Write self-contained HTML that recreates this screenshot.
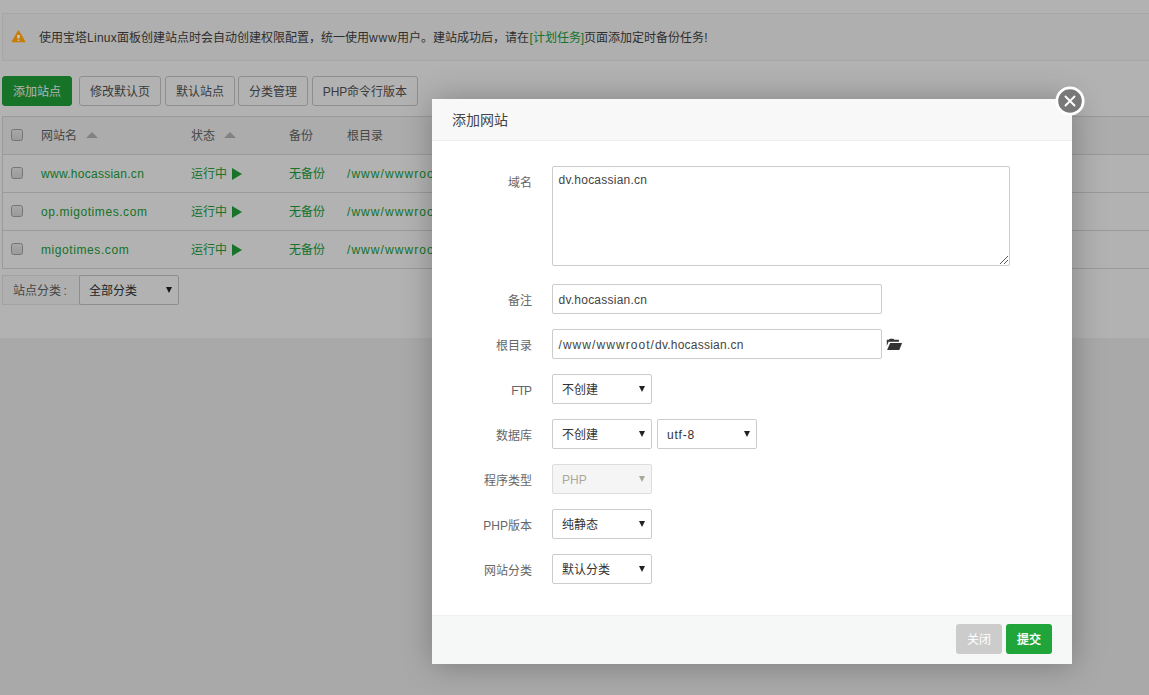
<!DOCTYPE html>
<html lang="zh-CN">
<head>
<meta charset="utf-8">
<title>添加网站</title>
<style>
*{box-sizing:border-box;margin:0;padding:0}
html,body{width:1149px;height:695px;overflow:hidden;background:#f2f2f2;font-family:"Liberation Sans",sans-serif;font-size:12px;color:#666}
.abs{position:absolute}
#page{position:absolute;left:0;top:0;width:1149px;height:695px;overflow:hidden}
#white{position:absolute;left:0;top:0;width:1149px;height:338px;background:#fff}
#tips{position:absolute;left:2px;top:13px;width:1300px;height:48px;border:1px solid #eee;background:#fbfbfb}
#tips .txt{position:absolute;left:36px;top:12px;height:24px;line-height:24px;color:#444;white-space:nowrap;font-size:12px}
#tips .txt a{color:#20a53a;text-decoration:none}
.lt{letter-spacing:.35px}
.btn{position:absolute;top:76px;height:30px;line-height:30px;border:1px solid #ccc;border-radius:3px;background:#fff;color:#555;text-align:center;font-size:12px;white-space:nowrap}
.btn.g{background:#20a53a;border-color:#20a53a;color:#fff}
#tbl{position:absolute;left:2px;top:116px;width:1300px;height:153px;border:1px solid #ddd;border-right:0}
#tbl .r{position:absolute;left:0;width:1300px;height:38px;border-bottom:1px solid #ddd;line-height:39px;white-space:nowrap}
#tbl .h{background:#f6f6f6;color:#666}
#tbl .r span{position:absolute;top:0}
#tbl .r .g{color:#20a53a}
.cb{position:absolute;left:8px;top:12px;width:12px;height:12px;border:1px solid #a8a8a8;border-radius:2.5px;background:linear-gradient(#f0f0f0,#dedede)}
.tri{position:absolute;width:0;height:0;border-left:6px solid transparent;border-right:6px solid transparent;border-bottom:6px solid #bbb}
.play{position:absolute;width:0;height:0;border-top:6px solid transparent;border-bottom:6px solid transparent;border-left:10.5px solid #20a53a}
#cat{position:absolute;left:2px;top:275px;width:78px;height:30px;border:1px solid #e9e9e9;border-right:0;background:#fbfbfb;line-height:30px;padding-left:10px;color:#666}
.sel{position:absolute;height:30px;width:100px;border:1px solid #ccc;border-radius:2px;background:#fff;line-height:30px;padding-left:9px;color:#333;font-size:12px;white-space:nowrap}
.sel i{position:absolute;right:6px;top:11px;width:0;height:0;border-left:3.5px solid transparent;border-right:3.5px solid transparent;border-top:6px solid #222}
.sel.dis{background:#f5f5f5;color:#aca899;border-color:#ddd}
.sel.dis i{border-top-color:#aca899}
#shade{position:absolute;left:0;top:0;width:1149px;height:695px;background:rgba(0,0,0,.3)}
#dlg{position:absolute;left:432px;top:99px;width:640px;height:565px;background:#fff;box-shadow:1px 1px 30px rgba(0,0,0,.28)}
#dlg .tt{position:absolute;left:0;top:0;width:640px;height:42px;background:#f8f8f8;border-bottom:1px solid #eee;line-height:42px;padding-left:20px;font-size:14px;color:#444}
#dlg .lb{position:absolute;left:0;width:100px;text-align:right;height:32px;line-height:34px;color:#666;font-size:12px;white-space:nowrap}
#dlg .in{position:absolute;left:120px;border:1px solid #ccc;border-radius:2px;background:#fff;color:#444;font-size:12px;line-height:30px;padding-left:5.5px;white-space:nowrap}
#dlg .ft{position:absolute;left:0;top:516px;width:640px;height:49px;background:#f6f8f8;border-top:1px solid #edf1f1}
#dlg .b{position:absolute;top:8px;width:46px;height:30px;line-height:32px;border-radius:3px;color:#fff;text-align:center;font-size:12px}
#cls{position:absolute;left:1055px;top:86px;width:30px;height:30px}
</style>
</head>
<body>
<div id="page">
  <div id="white"></div>

  <div id="tips">
    <div class="txt">使用宝塔<span style="letter-spacing:.27px">Linux</span>面板创建站点时会自动创建权限配置，统一使用<span style="letter-spacing:.8px">www</span>用户。建站成功后，请在<a>[计划任务]</a>页面添加定时备份任务<span style="letter-spacing:.6px">!</span></div>
  </div>

  <div class="btn g" style="left:2px;width:70px">添加站点</div>
  <div class="btn" style="left:79px;width:82px">修改默认页</div>
  <div class="btn" style="left:165px;width:70px">默认站点</div>
  <div class="btn" style="left:238px;width:70px">分类管理</div>
  <div class="btn" style="left:312px;width:106px">PHP命令行版本</div>

  <div id="tbl">
    <div class="r h" style="top:0">
      <div class="cb"></div>
      <span style="left:38px">网站名</span><div class="tri" style="left:83px;top:15px"></div>
      <span style="left:188px">状态</span><div class="tri" style="left:221px;top:15px"></div>
      <span style="left:286px">备份</span>
      <span style="left:344px">根目录</span>
    </div>
    <div class="r" style="top:38px">
      <div class="cb"></div>
      <span class="g" style="left:38px;letter-spacing:.274px">www.hocassian.cn</span>
      <span class="g" style="left:188px">运行中</span><div class="play" style="left:229px;top:12.5px"></div>
      <span class="g" style="left:286px">无备份</span>
      <span class="g" style="left:344px;letter-spacing:1.06px">/www/wwwroot/www.hocassian.cn</span>
    </div>
    <div class="r" style="top:76px">
      <div class="cb"></div>
      <span class="g" style="left:38px;letter-spacing:.57px">op.migotimes.com</span>
      <span class="g" style="left:188px">运行中</span><div class="play" style="left:229px;top:12.5px"></div>
      <span class="g" style="left:286px">无备份</span>
      <span class="g" style="left:344px;letter-spacing:1.06px">/www/wwwroot/op.migotimes.com</span>
    </div>
    <div class="r" style="top:114px">
      <div class="cb"></div>
      <span class="g" style="left:38px;letter-spacing:.586px">migotimes.com</span>
      <span class="g" style="left:188px">运行中</span><div class="play" style="left:229px;top:12.5px"></div>
      <span class="g" style="left:286px">无备份</span>
      <span class="g" style="left:344px;letter-spacing:1.06px">/www/wwwroot/migotimes.com</span>
    </div>
  </div>

  <div id="cat">站点分类<span style="margin-left:2.5px">:</span></div>
  <div class="sel" style="left:79px;top:275px">全部分类<i></i></div>

  <div id="shade"></div>

  <div id="dlg">
    <div class="tt">添加网站</div>

    <div class="lb" style="top:67px">域名</div>
    <div class="in" style="top:67px;width:458px;height:100px;line-height:18px;padding-top:4px"><span style="letter-spacing:.235px">dv.hocassian.cn</span>
      <svg class="abs" style="left:447px;top:89px" width="8" height="8" viewBox="0 0 8 8" shape-rendering="crispEdges" fill="#5a5a5a"><rect x="0" y="7" width="1" height="1"/><rect x="1" y="6" width="1" height="1"/><rect x="2" y="5" width="1" height="1"/><rect x="3" y="4" width="1" height="1"/><rect x="4" y="3" width="1" height="1"/><rect x="5" y="2" width="1" height="1"/><rect x="6" y="1" width="1" height="1"/><rect x="7" y="0" width="1" height="1"/><rect x="4" y="7" width="1" height="1"/><rect x="5" y="6" width="1" height="1"/><rect x="6" y="5" width="1" height="1"/><rect x="7" y="4" width="1" height="1"/></svg>
    </div>

    <div class="lb" style="top:185px">备注</div>
    <div class="in" style="top:185px;width:330px;height:30px"><span style="letter-spacing:.235px">dv.hocassian.cn</span></div>

    <div class="lb" style="top:230px">根目录</div>
    <div class="in" style="top:230px;width:330px;height:30px"><span style="letter-spacing:1.06px">/www/wwwroot/</span><span style="letter-spacing:.235px">dv.hocassian.cn</span></div>
    <svg class="abs" style="left:454px;top:239px" width="17" height="13" viewBox="0 0 17 13"><path d="M3.1 1.9 Q3.1 0.8 4.2 0.8 L6.9 0.8 Q8 0.8 8 1.9 Z" fill="#333"/><path d="M0.8 1.8 L12.9 1.8 L12.9 3.8 L2.6 3.8 L1 7.6 L0.8 7.6 Z" fill="#333"/><path d="M4.1 5.1 L16.1 5.1 L13.3 11.9 L1.1 11.9 Z" fill="#333"/></svg>

    <div class="lb" style="top:275px"><span style="letter-spacing:-1px;padding-right:1px">FTP</span></div>
    <div class="sel" style="left:120px;top:275px">不创建<i></i></div>

    <div class="lb" style="top:320px">数据库</div>
    <div class="sel" style="left:120px;top:320px">不创建<i></i></div>
    <div class="sel" style="left:225px;top:320px"><span style="letter-spacing:.8px">utf-8</span><i></i></div>

    <div class="lb" style="top:365px">程序类型</div>
    <div class="sel dis" style="left:120px;top:365px">PHP<i></i></div>

    <div class="lb" style="top:410px">PHP版本</div>
    <div class="sel" style="left:120px;top:410px">纯静态<i></i></div>

    <div class="lb" style="top:455px">网站分类</div>
    <div class="sel" style="left:120px;top:455px">默认分类<i></i></div>

    <div class="ft">
      <div class="b" style="left:524px;background:#ccc">关闭</div>
      <div class="b" style="left:574px;background:#20a53a;-webkit-text-stroke:.35px #fff">提交</div>
    </div>
  </div>

  <svg class="abs" style="left:11px;top:30.2px" width="15" height="13" viewBox="0 0 15 13"><path d="M7.5 1 L13.7 11.7 L1.3 11.7 Z" fill="#c57d0b" stroke="#c57d0b" stroke-width="1.3" stroke-linejoin="round"/><path d="M6.1 4.9 L8.9 4.9 L8.5 8.5 L6.5 8.5 Z" fill="#cfc8c0"/><rect x="6.4" y="9.7" width="2.2" height="1.1" fill="#cfc8c0"/></svg>
  <svg id="cls" viewBox="0 0 30 30"><circle cx="15" cy="15" r="14.6" fill="#fff"/><circle cx="15" cy="15" r="11.8" fill="#787878"/><path d="M10.5 10.5 L19.5 19.5 M19.5 10.5 L10.5 19.5" stroke="#fff" stroke-width="1.9" stroke-linecap="round"/></svg>
</div>
</body>
</html>
